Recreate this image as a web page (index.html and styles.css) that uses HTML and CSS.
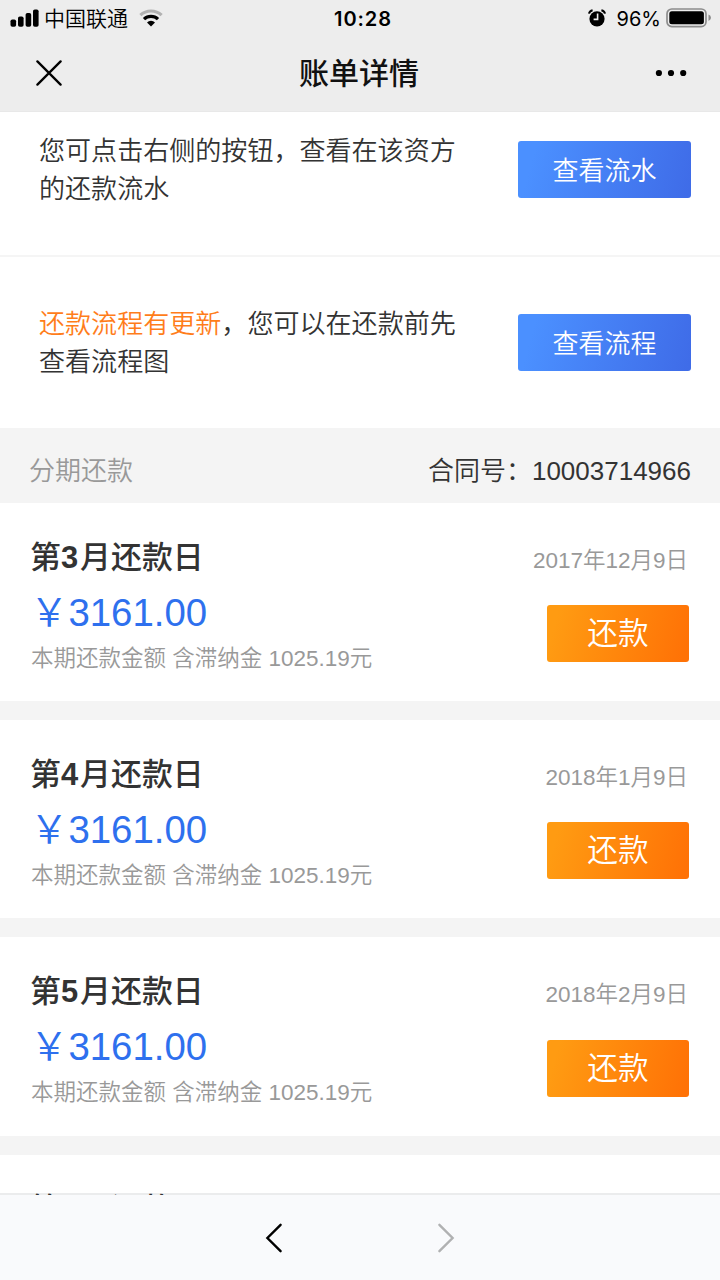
FILE: index.html
```html
<!DOCTYPE html>
<html lang="zh-CN">
<head>
<meta charset="utf-8">
<title>账单详情</title>
<link rel="stylesheet" href="styles.css">
</head>
<body>
<div class="screen">
  <header class="header">
    <div class="status">
      <div class="status-left">
        <svg width="30" height="18" viewBox="0 0 30 18"><rect x="0.5" y="10.5" width="5.6" height="7.2" rx="1.8"/><rect x="8" y="7.5" width="5.6" height="10.2" rx="1.8"/><rect x="15.6" y="4" width="5.6" height="13.7" rx="1.8"/><rect x="23" y="0.5" width="5.6" height="17.2" rx="1.8"/></svg>
        <span class="carrier">中国联通</span>
        <svg class="wifi" width="24" height="18" viewBox="0 0 24 18"><path d="M1.4 6.2A15.5 15.5 0 0 1 22.6 6.2" fill="none" stroke="#b2b2b2" stroke-width="3.2"/><path d="M5 10.2A10 10 0 0 1 19 10.2" fill="none" stroke="#000" stroke-width="3.2"/><path d="M8 13.4A5.8 5.8 0 0 1 16 13.4L12 17.4Z"/></svg>
      </div>
      <div class="clock">10:28</div>
      <div class="status-right">
        <svg width="18" height="18" viewBox="0 0 18 18"><circle cx="9" cy="9.8" r="7.6"/><path d="M1 4.6Q1.5 1.8 4.6 1.2M17 4.6Q16.5 1.8 13.4 1.2" fill="none" stroke="#000" stroke-width="2"/><path d="M9.6 4.6V10.4H5.6" fill="none" stroke="#eee" stroke-width="1.6"/></svg>
        <span class="percent">96%</span>
        <svg width="46" height="20" viewBox="0 0 46 20"><rect x="1" y="1" width="39" height="17.6" rx="4.8" fill="none" stroke="#8c8c8c" stroke-width="1.7"/><rect x="3.3" y="3.3" width="34.6" height="13" rx="2.5"/><path d="M42.5 6.6Q45 7.7 45 9.8T42.5 13Z" fill="#8c8c8c"/></svg>
      </div>
    </div>
    <div class="titlebar">
      <svg width="26" height="26" viewBox="0 0 26 26"><path d="M1.4 1.4L24.6 24.6M24.6 1.4L1.4 24.6" fill="none" stroke="#000" stroke-width="2.3" stroke-linecap="round"/></svg>
      <h1 class="title">账单详情</h1>
      <svg width="32" height="8" viewBox="0 0 32 8"><circle cx="3.9" cy="4" r="3.1"/><circle cx="16" cy="4" r="3.1"/><circle cx="28.2" cy="4" r="3.1"/></svg>
    </div>
  </header>

  <main class="content">
    <section class="notice notice-first">
      <p class="notice-text">您可点击右侧的按钮，查看在该资方的还款流水</p>
      <button class="btn btn-blue">查看流水</button>
    </section>
    <section class="notice">
      <p class="notice-text"><span class="hot">还款流程有更新</span>，您可以在还款前先查看流程图</p>
      <button class="btn btn-blue">查看流程</button>
    </section>
    <div class="section-bar"><span class="muted">分期还款</span><span>合同号：10003714966</span></div>

    <section class="bill">
      <div class="bill-info">
        <h2 class="bill-title">第<b class="num">3</b>月还款日</h2>
        <div class="amount">￥3161.00</div>
        <div class="detail">本期还款金额 含滞纳金 1025.19元</div>
      </div>
      <div class="bill-side"><div class="date">2017年12月9日</div><button class="btn btn-orange">还款</button></div>
    </section>
    <section class="bill">
      <div class="bill-info">
        <h2 class="bill-title">第<b class="num">4</b>月还款日</h2>
        <div class="amount">￥3161.00</div>
        <div class="detail">本期还款金额 含滞纳金 1025.19元</div>
      </div>
      <div class="bill-side"><div class="date">2018年1月9日</div><button class="btn btn-orange">还款</button></div>
    </section>
    <section class="bill">
      <div class="bill-info">
        <h2 class="bill-title">第<b class="num">5</b>月还款日</h2>
        <div class="amount">￥3161.00</div>
        <div class="detail">本期还款金额 含滞纳金 1025.19元</div>
      </div>
      <div class="bill-side"><div class="date">2018年2月9日</div><button class="btn btn-orange">还款</button></div>
    </section>
    <section class="bill">
      <div class="bill-info">
        <h2 class="bill-title">第<b class="num">6</b>月还款日</h2>
      </div>
    </section>
  </main>

  <nav class="toolbar">
    <svg width="18" height="30" viewBox="0 0 18 30"><path d="M15.6 1.8L2.4 15L15.6 28.2" fill="none" stroke="#000" stroke-width="2.4" stroke-linecap="round"/></svg>
    <svg width="18" height="30" viewBox="0 0 18 30"><path d="M2.4 1.8L15.6 15L2.4 28.2" fill="none" stroke="#b0b1b2" stroke-width="2.4" stroke-linecap="round"/></svg>
  </nav>
</div>
</body>
</html>
```
FILE: styles.css
```css
* { box-sizing: border-box; }
body { margin: 0; }
h1, h2, p { margin: 0; }
.screen {
  width: 720px;
  height: 1280px;
  overflow: hidden;
  display: flex;
  flex-direction: column;
  background: #fff;
  color: #333;
  font-family: "Liberation Sans", "Noto Sans CJK SC", sans-serif;
  font-weight: 350;
}
.header { height: 112px; flex: none; background: #ededed; color: #000; border-bottom: 1px solid #e8e8e8; }
.status { height: 36px; display: grid; grid-template-columns: 1fr auto 1fr; align-items: center; padding: 0 8px 0 10px; }
.status-left, .status-right { display: flex; align-items: center; height: 36px; }
.status-right { justify-content: flex-end; }
.carrier { font-size: 21px; line-height: 34px; margin: 1px 0 0 4px; }
.wifi { margin-left: 11px; }
.clock { font: 600 20px/34px Inter, sans-serif; letter-spacing: 0.9px; padding: 2px 0 0 4px; }
.percent { font: 400 20px/34px Inter, sans-serif; margin: 2px 5px 0 11px; }
.titlebar { height: 75px; display: flex; justify-content: space-between; align-items: center; padding: 0 33px 2px 36px; }
.title { font-size: 30px; font-weight: 500; line-height: 40px; color: #111; padding: 3px 0 0 1px; }

.content { flex: 1; min-height: 0; overflow: hidden; margin-bottom: -2px; }
.notice { height: 171.4px; display: flex; justify-content: space-between; align-items: flex-start; padding: 47px 29px 0 39px; }
.notice-first { height: 145px; padding-top: 19px; border-bottom: 2px solid #f5f5f5; }
.notice-text { width: 418px; font-size: 26.05px; line-height: 38px; padding-top: 1px; }
.hot { color: #ff7d1a; }
.btn { border: 0; padding: 0; border-radius: 3px; color: #fff; font-family: inherit; font-weight: inherit; text-align: center; }
.btn-blue { width: 173px; height: 57px; margin-top: 10px; padding-top: 3px; font-size: 26px; line-height: 54px; background: linear-gradient(105deg, #4b90ff 10%, #3f6ce8 98%); }
.section-bar { height: 74.2px; display: flex; justify-content: space-between; align-items: center; padding: 7px 29px 0; background: #f4f4f4; font-size: 26px; }
.muted { color: #999; }
.bill { height: 217.4px; display: flex; justify-content: space-between; padding: 34px 31px 0 30px; border-bottom: 19px solid #f4f4f4; }
.bill-title { font-size: 30.9px; line-height: 42px; font-weight: 500; }
.num { font-weight: 700; margin-right: 2px; }
.amount { font-size: 38.4px; line-height: 54px; margin: 7px 0 0; color: #2e70ee; }
.detail { font-size: 22.5px; line-height: 32px; margin: 3px 0 0 1px; color: #999; }
.bill-side { display: flex; flex-direction: column; align-items: flex-end; }
.date { font-size: 22.5px; line-height: 32px; margin: 8px 1px 0 0; color: #999; }
.btn-orange { width: 142px; height: 57px; margin-top: 28.4px; padding-top: 1px; font-size: 30.7px; line-height: 56px; background: linear-gradient(105deg, #ff9b12 8%, #ff7206 96%); }
.toolbar { position: relative; flex: none; height: 87px; border-top: 2px solid rgba(60, 70, 80, 0.1); background: #f9fafc; background-clip: padding-box; display: flex; justify-content: center; align-items: center; gap: 154px; }
```
